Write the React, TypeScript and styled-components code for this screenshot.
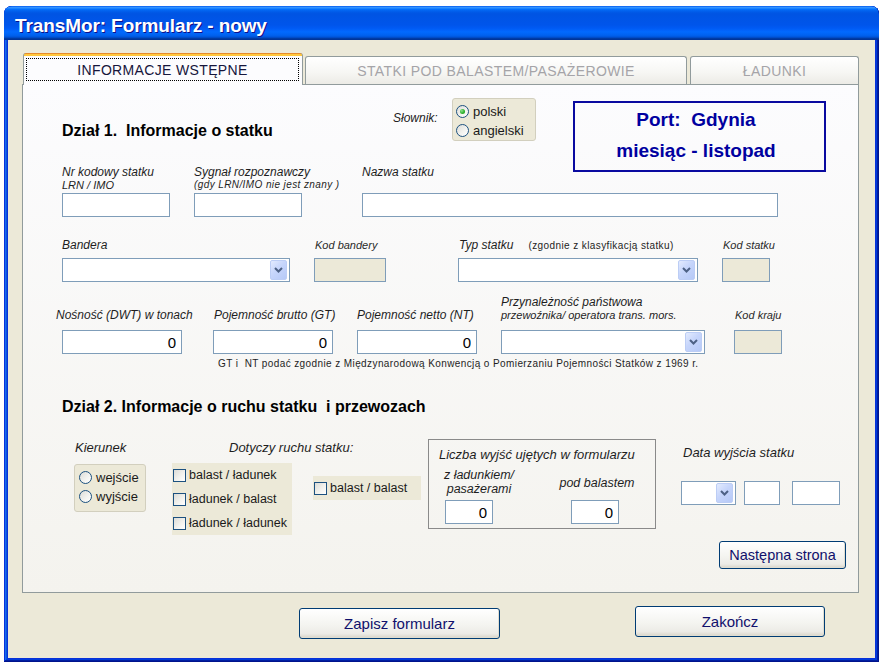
import React from "react";
import styled, { createGlobalStyle } from "styled-components";

const FONT = `"Liberation Sans", Arial, sans-serif`;

const GlobalStyle = createGlobalStyle`
  *, *::before, *::after { box-sizing: border-box; }
  html, body { margin: 0; padding: 0; background: #ffffff; }
  body { font-family: ${FONT}; }
`;

const Window = styled.div`
  width: 875px;
  height: 656px;
  margin: 6px 0 0 4px;
  padding: 0 4px 4px;
  display: flex;
  flex-direction: column;
  background: #0831d9;
  border-radius: 8px 8px 0 0;
  box-shadow: inset -1px -1px #00138c, inset 1px 1px #0831d9,
    inset -2px -2px #001ea0, inset 2px 2px #166aee, inset -3px -3px #003bda,
    inset 3px 3px #0855dd;
  overflow: hidden;
`;

const TitleBar = styled.div`
  flex: none;
  height: 34px;
  margin: 0 -4px;
  padding: 6px 0 0 11px;
  border-radius: 8px 8px 0 0;
  background: linear-gradient(
    180deg,
    #0058ee 0%,
    #3593ff 4%,
    #288eff 6%,
    #127dff 8%,
    #036ffc 10%,
    #0262ee 14%,
    #0057e5 20%,
    #0054e3 24%,
    #0055eb 56%,
    #005bf5 66%,
    #026afe 76%,
    #0062ef 86%,
    #0052d6 92%,
    #0040ab 94%,
    #003092 100%
  );
  color: #ffffff;
  font: bold 19px/28px ${FONT};
  letter-spacing: -0.1px;
  text-shadow: 1px 1px #0f1089;
  white-space: nowrap;
`;

const WindowBody = styled.div`
  flex: 1;
  display: flex;
  flex-direction: column;
  padding: 13px 16px 0 14px;
  background: #ece9d8;
`;

const TabStrip = styled.div`
  flex: none;
  display: flex;
  align-items: flex-end;
  height: 31px;
  padding-left: 1px;
  position: relative;
  z-index: 1;
`;

const ActiveTab = styled.div`
  flex: none;
  display: flex;
  width: 280px;
  height: 32px;
  margin-bottom: -1px;
  padding: 5px 3px 4px 2px;
  border-left: 1px solid #919b9c;
  border-right: 1px solid #919b9c;
  border-radius: 3px 3px 0 0;
  background: linear-gradient(
    180deg,
    #e68b2c 0,
    #e68b2c 1px,
    #ffc73c 1px,
    #ffc73c 3px,
    #fcfcfe 3px
  );
`;

const FocusRect = styled.div`
  flex: 1;
  display: flex;
  align-items: center;
  justify-content: center;
  border: 1px dotted #000000;
  font-size: 14px;
  letter-spacing: 0.35px;
  color: #16163c;
`;

const Tab = styled.div<{ $w: number; $ml: number }>`
  flex: none;
  display: flex;
  align-items: center;
  justify-content: center;
  width: ${(p) => p.$w}px;
  height: 28px;
  margin-left: ${(p) => p.$ml}px;
  border: 1px solid #919b9c;
  border-bottom: none;
  border-radius: 3px 3px 0 0;
  background: linear-gradient(180deg, #ffffff 0%, #f7f7f4 55%, #ecebe6 100%);
  color: #a5a4a8;
  font-size: 14px;
  letter-spacing: 0.4px;
`;

const Panel = styled.div`
  flex: none;
  display: flex;
  flex-direction: column;
  width: 837px;
  height: 509px;
  padding: 13px 0 0 39px;
  border: 1px solid #919b9c;
  background: linear-gradient(180deg, #fcfcfe 0%, #f4f3ee 100%);
`;

const TopRow = styled.div`
  flex: none;
  display: flex;
  align-items: flex-start;
  height: 67px;
`;

const TitleCell = styled.div`
  flex: none;
  width: 331px;
  padding-top: 24px;
`;

const SectionTitle = styled.h2`
  margin: 0;
  font: bold 16px/18px ${FONT};
  color: #000000;
  white-space: pre;
`;

const DictLabel = styled.div`
  flex: none;
  width: 59px;
  padding-top: 13px;
  font: italic 12px/14px ${FONT};
  color: #222222;
`;

const OptionBox = styled.div<{ $w: number; $h: number; $pl: number; $ml?: number; $mt?: number }>`
  flex: none;
  display: flex;
  flex-direction: column;
  width: ${(p) => p.$w}px;
  height: ${(p) => p.$h}px;
  margin: ${(p) => p.$mt ?? 0}px 0 0 ${(p) => p.$ml ?? 0}px;
  padding: 3px 0 0 ${(p) => p.$pl}px;
  border: 1px solid #d2cfbe;
  border-radius: 3px;
  background: #ece9d8;
`;

const RadioRow = styled.label`
  display: flex;
  align-items: center;
  gap: 4px;
  height: 19px;
  font: 13px/1 ${FONT};
  color: #1a1a1a;
  white-space: nowrap;
`;

const Radio = styled.span<{ $checked?: boolean }>`
  position: relative;
  flex: none;
  width: 13px;
  height: 13px;
  border: 1px solid #1c5180;
  border-radius: 50%;
  background: linear-gradient(135deg, #dcdcd7 0%, #f4f4f1 60%, #ffffff 100%);
  &::after {
    content: "";
    display: ${(p) => (p.$checked ? "block" : "none")};
    position: absolute;
    left: 3px;
    top: 3px;
    width: 5px;
    height: 5px;
    border-radius: 50%;
    background: radial-gradient(circle at 35% 35%, #8ee08e 0%, #2fb32f 55%, #1a8a1a 100%);
  }
`;

const PortBox = styled.div`
  flex: none;
  width: 253px;
  height: 71px;
  margin: 3px 0 0 37px;
  padding: 1px 7px 0 0;
  border: 2px solid #0a0aa0;
  text-align: center;
`;

const PortLine = styled.div`
  font: bold 19px/31px ${FONT};
  color: #0000a0;
  white-space: pre;
`;

const FieldRow = styled.div<{ $mt: number }>`
  flex: none;
  display: flex;
  align-items: flex-start;
  margin-top: ${(p) => p.$mt}px;
`;

const Field = styled.div<{ $w: number; $ml?: number }>`
  flex: none;
  display: flex;
  flex-direction: column;
  width: ${(p) => p.$w}px;
  margin-left: ${(p) => p.$ml ?? 0}px;
`;

const LabelArea = styled.div<{ $h: number; $pt?: number; $pb?: number; $end?: boolean }>`
  display: flex;
  flex-direction: column;
  justify-content: ${(p) => (p.$end ? "flex-end" : "flex-start")};
  height: ${(p) => p.$h}px;
  padding: ${(p) => p.$pt ?? 0}px 0 ${(p) => p.$pb ?? 0}px;
  white-space: nowrap;
`;

const Caption = styled.div<{ $lh?: number; $shift?: number }>`
  margin-left: ${(p) => p.$shift ?? 0}px;
  font: italic 12px/${(p) => p.$lh ?? 14}px ${FONT};
  color: #1e1e1e;
`;

const SubCaption = styled.div<{ $lh?: number }>`
  font: italic 11px/${(p) => p.$lh ?? 13}px ${FONT};
  color: #1e1e1e;
`;

const SmallHint = styled.div<{ $lh?: number; $italic?: boolean }>`
  font: ${(p) => (p.$italic ? "italic " : "")}10px/${(p) => p.$lh ?? 12}px ${FONT};
  letter-spacing: 0.4px;
  color: #1e1e1e;
`;

const CodeCaption = styled.div`
  padding-left: 1px;
  font: italic 11px/14px ${FONT};
  color: #2a2a2a;
`;

const LabelLine = styled.div`
  display: flex;
  align-items: baseline;
  gap: 15px;
  padding-left: 1px;
`;

const TextBox = styled.input<{ $w?: number; $ml?: number; $beige?: boolean; $num?: boolean }>`
  display: block;
  flex: none;
  width: ${(p) => (p.$w ? `${p.$w}px` : "100%")};
  height: 24px;
  margin: 0 0 0 ${(p) => p.$ml ?? 0}px;
  padding: 0 5px;
  border: 1px solid #7f9db9;
  border-radius: 0;
  background: ${(p) => (p.$beige ? "#ece9d8" : "#ffffff")};
  font: 15px ${FONT};
  color: #000000;
  text-align: ${(p) => (p.$num ? "right" : "left")};
  outline: none;
`;

const Combo = styled.div<{ $w?: number }>`
  flex: none;
  display: flex;
  justify-content: flex-end;
  align-items: center;
  width: ${(p) => (p.$w ? `${p.$w}px` : "100%")};
  height: 24px;
  padding: 1px 2px 1px 0;
  border: 1px solid #7f9db9;
  background: #ffffff;
`;

const ComboButton = styled.span`
  display: flex;
  align-items: center;
  justify-content: center;
  width: 17px;
  height: 20px;
  border: 1px solid #bccdf5;
  border-radius: 2px;
  background: linear-gradient(135deg, #e3ebfe 0%, #c6d5fb 45%, #b6c9f7 100%);
`;

const Note = styled.div`
  margin: 4px 0 0 156px;
  font: 10px/12px ${FONT};
  letter-spacing: 0.4px;
  color: #1e1e1e;
  white-space: pre;
`;

const Section2Title = styled(SectionTitle)`
  margin-top: 28px;
`;

const MovementRow = styled.div`
  flex: none;
  display: flex;
  align-items: flex-start;
  margin-top: 23px;
`;

const Column = styled.div<{ $w: number; $ml: number }>`
  flex: none;
  display: flex;
  flex-direction: column;
  width: ${(p) => p.$w}px;
  margin-left: ${(p) => p.$ml}px;
`;

const GroupCaption = styled.div<{ $mt: number; $pl?: number }>`
  margin-top: ${(p) => p.$mt}px;
  padding-left: ${(p) => p.$pl ?? 0}px;
  font: italic 13px/16px ${FONT};
  color: #1e1e1e;
  white-space: nowrap;
`;

const CheckPanel = styled.div<{ $w: number; $h: number; $mt: number; $ml?: number }>`
  flex: none;
  display: flex;
  flex-direction: column;
  justify-content: center;
  width: ${(p) => p.$w}px;
  height: ${(p) => p.$h}px;
  margin: ${(p) => p.$mt}px 0 0 ${(p) => p.$ml ?? 0}px;
  background: #ece9d8;
`;

const CheckRow = styled.label`
  display: flex;
  align-items: center;
  gap: 3px;
  height: 24px;
  font: 12.5px/1 ${FONT};
  color: #1a1a1a;
  white-space: nowrap;
`;

const CheckSquare = styled.span`
  flex: none;
  width: 13px;
  height: 13px;
  margin-left: 1px;
  border: 1px solid #1c5180;
  background: linear-gradient(135deg, #dcdcd7 0%, #f3f3ef 60%, #ffffff 100%);
`;

const CountGroup = styled.div`
  flex: none;
  width: 228px;
  height: 90px;
  margin-left: 7px;
  padding: 7px 0 0 10px;
  border: 1px solid #8a8a8a;
`;

const CountCols = styled.div`
  display: flex;
  margin-top: 5px;
`;

const CountLabel = styled.div<{ $pt: number }>`
  height: 32px;
  padding-top: ${(p) => p.$pt}px;
  font: italic 12.5px/14px ${FONT};
  color: #1e1e1e;
  text-align: center;
  white-space: nowrap;
`;

const DateInputs = styled.div`
  display: flex;
  margin-top: 20px;
`;

const XPButton = styled.button<{ $w: number; $h: number; $ml?: number; $mt?: number; $size: number }>`
  flex: none;
  width: ${(p) => p.$w}px;
  height: ${(p) => p.$h}px;
  margin: ${(p) => p.$mt ?? 0}px 0 0 ${(p) => p.$ml ?? 0}px;
  padding: 0;
  border: 1px solid #003c74;
  border-radius: 3px;
  background: linear-gradient(180deg, #ffffff 0%, #f4f4f0 55%, #ecebe6 85%, #d8d4c8 100%);
  box-shadow: inset -1px -1px 0 #e0ddd0;
  font: ${(p) => p.$size}px ${FONT};
  color: #10106c;
  cursor: default;
`;

const NextButton = styled(XPButton)`
  align-self: flex-end;
  margin: 6px 12px 0 0;
`;

const ButtonRow = styled.div`
  flex: none;
  display: flex;
  align-items: flex-start;
  margin-top: 13px;
`;

function Chevron() {
  return (
    <svg width="9" height="6" viewBox="0 0 9 6">
      <path d="M1 1 L4.5 4.5 L8 1" fill="none" stroke="#4d6185" strokeWidth="2" />
    </svg>
  );
}

function Select({ w }: { w?: number }) {
  return (
    <Combo $w={w}>
      <ComboButton>
        <Chevron />
      </ComboButton>
    </Combo>
  );
}

function Check({ label }: { label: string }) {
  return (
    <CheckRow>
      <CheckSquare />
      {label}
    </CheckRow>
  );
}

export default function App() {
  return (
    <>
      <GlobalStyle />
      <Window>
        <TitleBar>TransMor: Formularz - nowy</TitleBar>
        <WindowBody>
          <TabStrip>
            <ActiveTab>
              <FocusRect>INFORMACJE WSTĘPNE</FocusRect>
            </ActiveTab>
            <Tab $w={382} $ml={2}>
              STATKI POD BALASTEM/PASAŻEROWIE
            </Tab>
            <Tab $w={169} $ml={3}>
              ŁADUNKI
            </Tab>
          </TabStrip>
          <Panel>
            <TopRow>
              <TitleCell>
                <SectionTitle>{"Dział 1.  Informacje o statku"}</SectionTitle>
              </TitleCell>
              <DictLabel>Słownik:</DictLabel>
              <OptionBox $w={84} $h={43} $pl={3}>
                <RadioRow>
                  <Radio $checked />
                  polski
                </RadioRow>
                <RadioRow>
                  <Radio />
                  angielski
                </RadioRow>
              </OptionBox>
              <PortBox>
                <PortLine>{"Port:  Gdynia"}</PortLine>
                <PortLine>miesiąc - listopad</PortLine>
              </PortBox>
            </TopRow>

            <FieldRow $mt={0}>
              <Field $w={108}>
                <LabelArea $h={28} $pt={1}>
                  <Caption $lh={13}>Nr kodowy statku</Caption>
                  <SubCaption>LRN / IMO</SubCaption>
                </LabelArea>
                <TextBox />
              </Field>
              <Field $w={108} $ml={24}>
                <LabelArea $h={28} $pt={1}>
                  <Caption $lh={13}>Sygnał rozpoznawczy</Caption>
                  <SmallHint $italic>(gdy LRN/IMO nie jest znany )</SmallHint>
                </LabelArea>
                <TextBox />
              </Field>
              <Field $w={416} $ml={60}>
                <LabelArea $h={28} $pt={1}>
                  <Caption $lh={13}>Nazwa statku</Caption>
                </LabelArea>
                <TextBox />
              </Field>
            </FieldRow>

            <FieldRow $mt={21}>
              <Field $w={228}>
                <LabelArea $h={20}>
                  <Caption>Bandera</Caption>
                </LabelArea>
                <Select />
              </Field>
              <Field $w={72} $ml={24}>
                <LabelArea $h={20}>
                  <CodeCaption>Kod bandery</CodeCaption>
                </LabelArea>
                <TextBox $beige />
              </Field>
              <Field $w={240} $ml={72}>
                <LabelArea $h={20}>
                  <LabelLine>
                    <Caption>Typ statku</Caption>
                    <SmallHint $lh={14}>(zgodnie z klasyfikacją statku)</SmallHint>
                  </LabelLine>
                </LabelArea>
                <Select />
              </Field>
              <Field $w={48} $ml={24}>
                <LabelArea $h={20}>
                  <CodeCaption>Kod statku</CodeCaption>
                </LabelArea>
                <TextBox $beige />
              </Field>
            </FieldRow>

            <FieldRow $mt={18}>
              <Field $w={120}>
                <LabelArea $h={30} $end $pb={8}>
                  <Caption $shift={-6}>Nośność (DWT) w tonach</Caption>
                </LabelArea>
                <TextBox $num defaultValue="0" readOnly />
              </Field>
              <Field $w={120} $ml={31}>
                <LabelArea $h={30} $end $pb={8}>
                  <Caption $shift={1}>Pojemność brutto (GT)</Caption>
                </LabelArea>
                <TextBox $num defaultValue="0" readOnly />
              </Field>
              <Field $w={120} $ml={24}>
                <LabelArea $h={30} $end $pb={8}>
                  <Caption>Pojemność netto (NT)</Caption>
                </LabelArea>
                <TextBox $num defaultValue="0" readOnly />
              </Field>
              <Field $w={204} $ml={24}>
                <LabelArea $h={30} $end $pb={8}>
                  <Caption $lh={13}>Przynależność państwowa</Caption>
                  <SubCaption>przewoźnika/ operatora trans. mors.</SubCaption>
                </LabelArea>
                <Select />
              </Field>
              <Field $w={48} $ml={29}>
                <LabelArea $h={30} $end $pb={8}>
                  <CodeCaption>Kod kraju</CodeCaption>
                </LabelArea>
                <TextBox $beige />
              </Field>
            </FieldRow>

            <Note>
              {"GT i  NT podać zgodnie z Międzynarodową Konwencją o Pomierzaniu Pojemności Statków z 1969 r."}
            </Note>

            <Section2Title>{"Dział 2. Informacje o ruchu statku  i przewozach"}</Section2Title>

            <MovementRow>
              <Column $w={72} $ml={12}>
                <GroupCaption $mt={1} $pl={1}>
                  Kierunek
                </GroupCaption>
                <OptionBox $w={72} $h={48} $pl={4} $mt={8}>
                  <RadioRow>
                    <Radio />
                    wejście
                  </RadioRow>
                  <RadioRow>
                    <Radio />
                    wyjście
                  </RadioRow>
                </OptionBox>
              </Column>

              <Column $w={120} $ml={26}>
                <GroupCaption $mt={1} $pl={57}>
                  Dotyczy ruchu statku:
                </GroupCaption>
                <CheckPanel $w={120} $h={72} $mt={7}>
                  <Check label="balast / ładunek" />
                  <Check label="ładunek / balast" />
                  <Check label="ładunek / ładunek" />
                </CheckPanel>
              </Column>

              <CheckPanel $w={108} $h={24} $mt={37} $ml={21}>
                <Check label="balast / balast" />
              </CheckPanel>

              <CountGroup>
                <GroupCaption $mt={0}>Liczba wyjść ujętych w formularzu</GroupCaption>
                <CountCols>
                  <Column $w={80} $ml={0}>
                    <CountLabel $pt={0}>
                      z ładunkiem/
                      <br />
                      pasażerami
                    </CountLabel>
                    <TextBox $w={48} $ml={6} $num defaultValue="0" readOnly />
                  </Column>
                  <Column $w={76} $ml={40}>
                    <CountLabel $pt={8}>pod balastem</CountLabel>
                    <TextBox $w={48} $ml={12} $num defaultValue="0" readOnly />
                  </Column>
                </CountCols>
              </CountGroup>

              <Column $w={159} $ml={25}>
                <GroupCaption $mt={6} $pl={2}>
                  Data wyjścia statku
                </GroupCaption>
                <DateInputs>
                  <Select w={55} />
                  <TextBox $w={36} $ml={8} />
                  <TextBox $w={48} $ml={12} />
                </DateInputs>
              </Column>
            </MovementRow>

            <NextButton $w={127} $h={28} $size={14.5}>
              Następna strona
            </NextButton>
          </Panel>

          <ButtonRow>
            <XPButton $w={201} $h={31} $ml={277} $mt={2} $size={15}>
              Zapisz formularz
            </XPButton>
            <XPButton $w={190} $h={31} $ml={135} $size={15}>
              Zakończ
            </XPButton>
          </ButtonRow>
        </WindowBody>
      </Window>
    </>
  );
}
